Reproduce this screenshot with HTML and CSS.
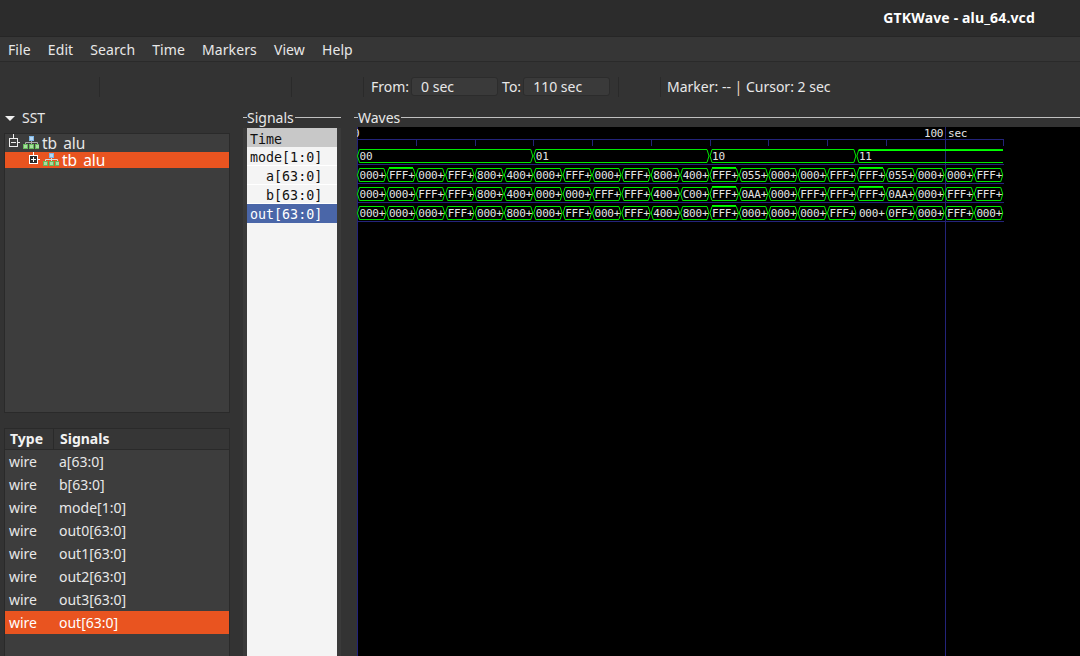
FILE: index.html
```html
<!DOCTYPE html>
<html lang="en">
<head>
  <meta charset="UTF-8">
  <title>GTKWave - alu_64.vcd</title>
  <link rel="stylesheet" href="styles.css">
</head>
<body>

  <div class="titlebar">GTKWave - alu_64.vcd</div>

  <div class="menubar">
    <span>File</span>
    <span>Edit</span>
    <span>Search</span>
    <span>Time</span>
    <span>Markers</span>
    <span>View</span>
    <span>Help</span>
  </div>

  <div class="toolbar">
    <div class="tool-group group-a"></div>
    <div class="tool-group group-b"></div>
    <div class="tool-group group-c"></div>
    <div class="tool-group group-range">
      <span>From:</span>
      <div class="entry">0 sec</div>
      <span>To:</span>
      <div class="entry">110 sec</div>
    </div>
    <div class="tool-group group-d"></div>
    <div class="marker-info">Marker: -- <span class="bar">|</span> Cursor: 2 sec</div>
  </div>

  <div class="main">
    <!-- SST tree and signal table -->
    <div class="sst-pane">
      <div class="sst-title"><span class="arrow"></span>SST</div>
      <div class="tree">
        <div class="tree-row">
          <svg class="tree-icons" width="34" height="18" viewBox="0 0 34 18">
            <path d="M8.5 0V4.5M12.5 8.5H15" stroke="#eee" fill="none"/>
            <rect x="4.5" y="4.5" width="8" height="8" fill="none" stroke="#eee"/>
            <path d="M6 8.5H11" stroke="#eee"/>
            <path d="M26.5 7V10M20.5 10V8.5H32.5V10" stroke="#aaa" fill="none"/>
            <rect x="24.5" y="2.5" width="4" height="4" fill="#b5d9f5" stroke="#7fb6e6"/>
            <rect x="18.5" y="10.5" width="4" height="4" fill="#a8dca0" stroke="#66bb5a"/>
            <rect x="24.5" y="10.5" width="4" height="4" fill="#a8dca0" stroke="#66bb5a"/>
            <rect x="30.5" y="10.5" width="4" height="4" fill="#a8dca0" stroke="#66bb5a"/>
          </svg>
          <span>tb alu</span>
        </div>
        <div class="tree-row selected child">
          <svg class="tree-icons" width="34" height="16" viewBox="0 0 34 16">
            <path d="M8.5 0V3.5M12.5 7.5H15" stroke="#fff" fill="none"/>
            <rect x="4.5" y="3.5" width="8" height="8" fill="#2a2a2a" stroke="#fff"/>
            <path d="M6 7.5H11M8.5 5V10" stroke="#fff"/>
            <path d="M26.5 6V9M20.5 9V7.5H32.5V9" stroke="#ddd" fill="none"/>
            <rect x="24.5" y="1.5" width="4" height="4" fill="#b5d9f5" stroke="#7fb6e6"/>
            <rect x="18.5" y="9.5" width="4" height="4" fill="#a8dca0" stroke="#66bb5a"/>
            <rect x="24.5" y="9.5" width="4" height="4" fill="#a8dca0" stroke="#66bb5a"/>
            <rect x="30.5" y="9.5" width="4" height="4" fill="#a8dca0" stroke="#66bb5a"/>
          </svg>
          <span>tb alu</span>
        </div>
      </div>

      <div class="signal-table">
        <div class="table-head">
          <div class="col-type">Type</div>
          <div class="col-name">Signals</div>
        </div>
        <div class="table-row"><div class="col-type">wire</div><div class="col-name">a[63:0]</div></div>
        <div class="table-row"><div class="col-type">wire</div><div class="col-name">b[63:0]</div></div>
        <div class="table-row"><div class="col-type">wire</div><div class="col-name">mode[1:0]</div></div>
        <div class="table-row"><div class="col-type">wire</div><div class="col-name">out0[63:0]</div></div>
        <div class="table-row"><div class="col-type">wire</div><div class="col-name">out1[63:0]</div></div>
        <div class="table-row"><div class="col-type">wire</div><div class="col-name">out2[63:0]</div></div>
        <div class="table-row"><div class="col-type">wire</div><div class="col-name">out3[63:0]</div></div>
        <div class="table-row selected"><div class="col-type">wire</div><div class="col-name">out[63:0]</div></div>
      </div>
    </div>

    <!-- Signal names -->
    <div class="names-pane">
      <div class="frame-label"><span class="dash"></span><span>Signals</span><span class="rule"></span></div>
      <div class="names-body">
        <div class="name-list">
          <div class="name-row time">Time</div>
          <div class="name-row">mode[1:0]</div>
          <div class="name-row">  a[63:0]</div>
          <div class="name-row">  b[63:0]</div>
          <div class="name-row active">out[63:0]</div>
        </div>
      </div>
    </div>

    <!-- Waveform canvas -->
    <div class="waves-pane">
      <div class="frame-label"><span class="dash"></span><span>Waves</span><span class="rule"></span></div>
      <div class="wave-body">
        <svg id="waveCanvas" class="wave-canvas" viewBox="357 127 723 529" width="723" height="529"></svg>
      </div>
    </div>
  </div>

  <script src="waves.js"></script>
</body>
</html>
```

FILE: styles.css
```css
* {
  box-sizing: border-box;
}

body {
  font-family: "Noto Sans", sans-serif;
  font-size: 14px;
  margin: 0;
  width: 1080px;
  height: 656px;
  overflow: hidden;
  background-color: #333333;
  color: #e8e8e8;
}

.titlebar {
  height: 37px;
  padding-right: 45px;
  background-color: #2c2c2c;
  border-bottom: 1px solid #262626;
  color: #fff;
  font-weight: bold;
  letter-spacing: 0.15px;
  line-height: 36px;
  text-align: right;
}

.menubar {
  display: flex;
  gap: 17px;
  height: 25px;
  padding-left: 8px;
  background-color: #363636;
  border-bottom: 1px solid #2a2a2a;
  letter-spacing: 0.1px;
  line-height: 25px;
}

.toolbar {
  display: flex;
  align-items: center;
  height: 41px;
  padding-top: 8px;
}

.tool-group {
  height: 20px;
  border-right: 1px solid #2a2a2a;
}

.group-a {
  width: 100px;
}

.group-b {
  width: 192px;
}

.group-c {
  width: 72px;
}

.group-range {
  display: flex;
  align-items: center;
  width: 255px;
  padding-left: 7px;
}

.group-d {
  width: 42px;
}

.entry {
  width: 87px;
  height: 19px;
  margin: 0 4px 0 2px;
  padding-left: 9px;
  background-color: #3a3a3a;
  border: 1px solid #2c2c2c;
  border-radius: 3px;
  line-height: 17px;
}

.marker-info {
  padding-left: 6px;
}

.bar {
  color: #f0d8c0;
}

.main {
  display: flex;
  height: 553px;
}

.sst-pane {
  width: 243px;
  padding-left: 4px;
  padding-right: 13px;
}

.sst-title {
  display: flex;
  align-items: center;
  height: 30px;
  line-height: 30px;
}

.arrow {
  width: 0;
  height: 0;
  margin: 0 7px 0 1px;
  border-left: 5px solid transparent;
  border-right: 5px solid transparent;
  border-top: 5px solid #f0f0f0;
}

.tree {
  height: 280px;
  background-color: #3d3d3d;
  border: 1px solid #2a2a2a;
  font-size: 15.5px;
  line-height: 16px;
  word-spacing: 2px;
}

.tree-row {
  display: flex;
  align-items: center;
  height: 18px;
}

.tree-row.child {
  height: 16px;
  padding-left: 20px;
}

.tree-icons {
  flex: none;
  margin-right: 3px;
}

.selected {
  background-color: #e95420;
  color: #fff;
}

.signal-table {
  height: 240px;
  margin-top: 15px;
  background-color: #3d3d3d;
  border: 1px solid #2a2a2a;
}

.table-head {
  display: flex;
  height: 21px;
  background-color: #363636;
  border-bottom: 1px solid #2a2a2a;
  color: #f2f2f2;
  font-weight: bold;
  line-height: 20px;
}

.table-row {
  display: flex;
  height: 23px;
  line-height: 23px;
}

.col-type {
  width: 49px;
  padding-left: 5px;
}

.table-head .col-type {
  border-right: 1px solid #2a2a2a;
}

.table-row .col-type {
  padding-left: 4px;
}

.col-name {
  padding-left: 6px;
}

.table-row .col-name {
  padding-left: 5px;
}

.names-pane {
  width: 111px;
}

.frame-label {
  display: flex;
  align-items: center;
  height: 18px;
  margin: 5px 0 2px;
}

.dash {
  width: 4px;
  height: 1px;
  background-color: #c0c0c0;
}

.rule {
  flex: 1;
  height: 1px;
  margin-left: 1px;
  background-color: #c0c0c0;
}

.names-pane .rule {
  margin-right: 13px;
}

.names-body {
  width: 98px;
  height: 528px;
  padding: 0 4px;
  background-color: #3a3a3a;
}

.name-list {
  height: 528px;
  background-color: #f4f4f4;
  color: #111;
  font-family: "DejaVu Sans Mono", monospace;
  font-size: 13.33px;
}

.name-row {
  height: 19px;
  padding-left: 3px;
  border-bottom: 1px solid #fff;
  line-height: 21px;
  white-space: pre;
}

.name-row.time {
  background-color: #c8c8c8;
  border-bottom: 0;
  line-height: 23px;
}

.name-row.active {
  background-color: #4a66a8;
  border-bottom: 0;
  color: #fff;
}

.waves-pane {
  flex: 1;
}

.wave-body {
  height: 529px;
  margin-top: -1px;
  padding-left: 3px;
}

.wave-canvas {
  display: block;
  background-color: #000;
}

.wave-canvas text {
  fill: #e4e4e4;
  font-family: "DejaVu Sans Mono", monospace;
  font-size: 11px;
  letter-spacing: -0.2px;
}
```

FILE: waves.js
```js
// Draws the waveform view. Coordinates in the svg match the window.
const svg = document.getElementById("waveCanvas");
const NS = "http://www.w3.org/2000/svg";

const X0 = 357.5;
const PX_PER_SEC = 5.875;
const END_SEC = 110;
const GREEN = "#00e800";
const NAVY = "#23237a";

const rows = [
  {
    top: 168.5,
    thick: [1, 12, 17],
    plain: [],
    values: "000 FFF 000 FFF 800 400 000 FFF 000 FFF 800 400 FFF 055 000 000 FFF FFF 055 000 000 FFF"
  },
  {
    top: 187.5,
    thick: [12, 17],
    plain: [],
    values: "000 000 FFF FFF 800 400 000 000 FFF FFF 400 C00 FFF 0AA 000 FFF FFF FFF 0AA 000 FFF FFF"
  },
  {
    top: 206.5,
    thick: [12],
    plain: [17],
    values: "000 000 000 FFF 000 800 000 FFF 000 FFF 400 800 FFF 000 000 000 FFF 000 0FF 000 FFF 000"
  }
];

function add(tag, attrs, text) {
  const el = document.createElementNS(NS, tag);
  for (const key in attrs) {
    el.setAttribute(key, attrs[key]);
  }
  if (text) {
    el.textContent = text;
  }
  svg.appendChild(el);
  return el;
}

function line(x1, y1, x2, y2, stroke) {
  add("line", { x1, y1, x2, y2, stroke, "shape-rendering": "crispEdges" });
}

function cell(x1, x2, top, height, label, thick) {
  const mid = top + height / 2;
  const bottom = top + height;
  const points = [
    [x1, mid], [x1 + 2, top], [x2 - 2, top], [x2, mid], [x2 - 2, bottom], [x1 + 2, bottom]
  ].join(" ");
  add("polygon", { points, fill: "none", stroke: GREEN });
  if (thick) {
    line(x1 + 2, top - 1, x2 - 2, top - 1, "#00ff00");
  }
  add("text", { x: x1 + 2, y: bottom - 2.5 }, label);
}

// Grid and time axis
line(357.5, 127, 357.5, 656, NAVY);
line(945.5, 127, 945.5, 656, NAVY);
[139.5, 164.5, 183.5, 202.5, 221.5].forEach(function (y) {
  line(358, y, 1004, y, NAVY);
});
for (let sec = 0; sec <= END_SEC; sec += 10) {
  const x = Math.floor(X0 + sec * PX_PER_SEC) + 0.5;
  line(x, 139.5, x, 146, NAVY);
}
add("text", { x: 353, y: 137 }, "0");
add("text", { x: 924, y: 137 }, "100");
add("text", { x: 948, y: 137 }, "sec");

// mode[1:0]
const modes = [[0, 30, "00"], [30, 60, "01"], [60, 85, "10"]];
modes.forEach(function (m) {
  cell(X0 + m[0] * PX_PER_SEC, X0 + m[1] * PX_PER_SEC - 1, 149.5, 13, m[2]);
});

// last mode value runs off the end of the dump, so it stays open on the right
const lastX = X0 + 85 * PX_PER_SEC;
add("polyline", {
  points: [[1003, 149.5], [lastX + 2, 149.5], [lastX, 156], [lastX + 2, 162.5], [1003, 162.5]].join(" "),
  fill: "none",
  stroke: GREEN
});
line(lastX + 2, 150.5, 1003, 150.5, "#00ff00");
add("text", { x: lastX + 2, y: 160 }, "11");

// a, b, out
rows.forEach(function (row) {
  row.values.split(" ").forEach(function (value, i) {
    const x1 = X0 + i * 5 * PX_PER_SEC;
    const x2 = Math.min(x1 + 5 * PX_PER_SEC - 1, 1003);
    if (row.plain.includes(i)) {
      add("text", { x: x1 + 2, y: row.top + 10.5 }, value + "+");
    } else {
      cell(x1, x2, row.top, 13, value + "+", row.thick.includes(i));
    }
  });
});
```
